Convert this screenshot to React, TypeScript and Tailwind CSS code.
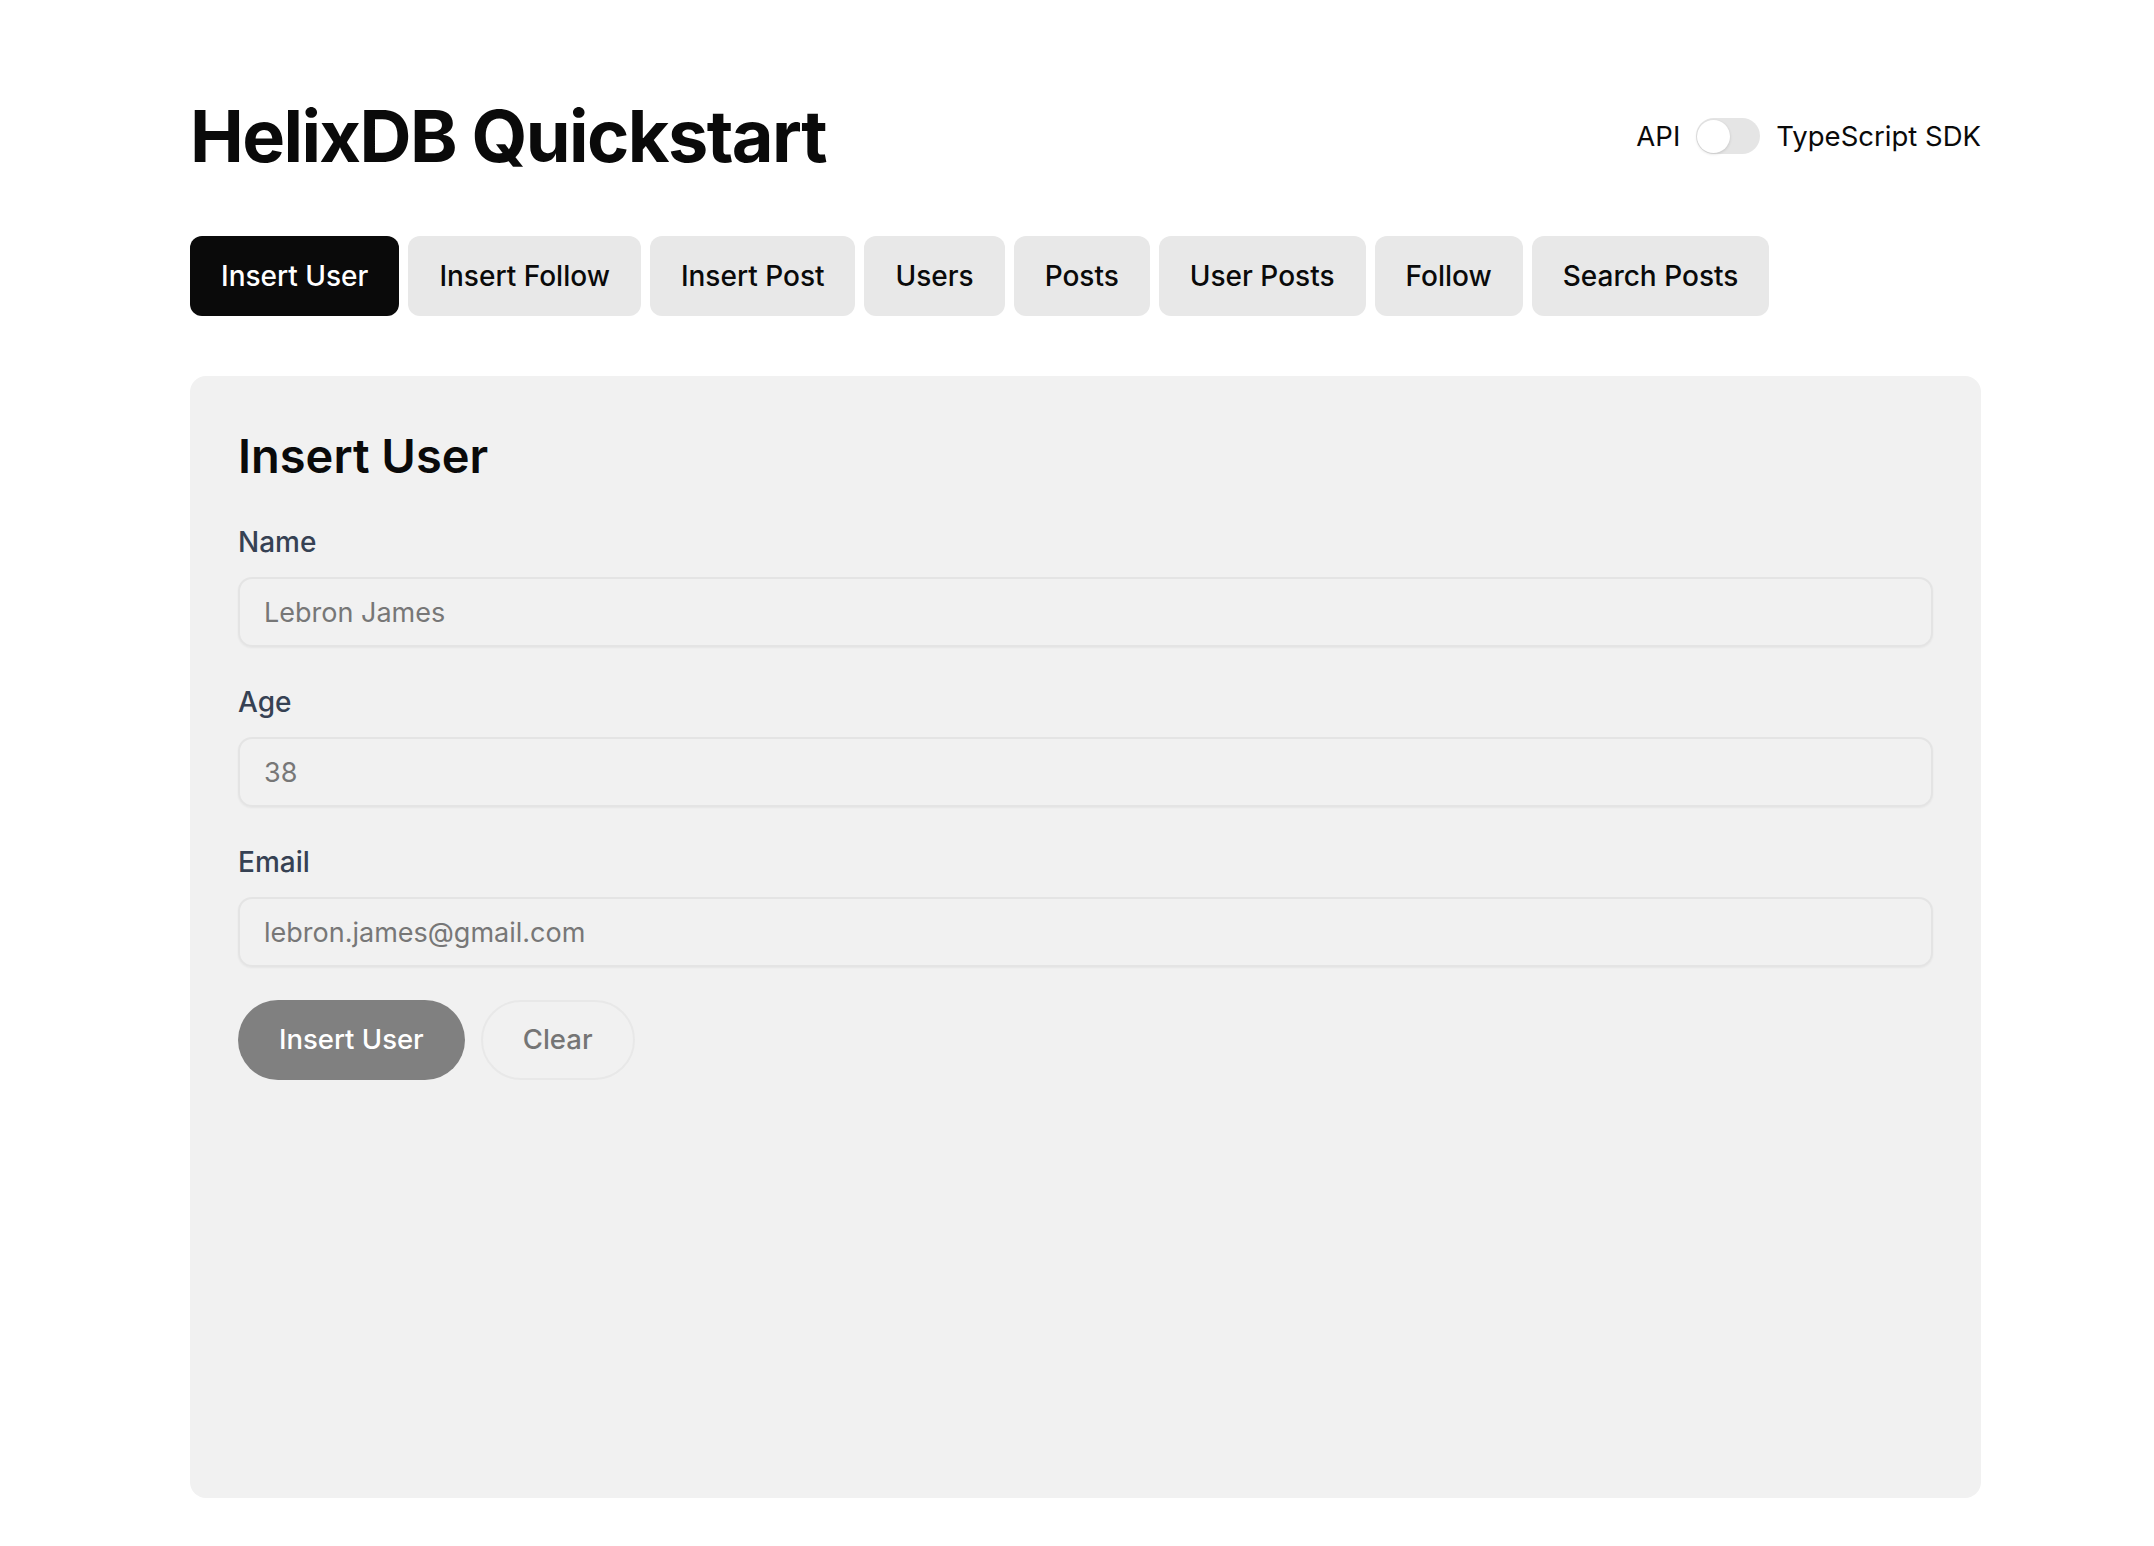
const tabs = [
  "Insert User",
  "Insert Follow",
  "Insert Post",
  "Users",
  "Posts",
  "User Posts",
  "Follow",
  "Search Posts",
];

const fields = [
  { label: "Name", placeholder: "Lebron James", type: "text" },
  { label: "Age", placeholder: "38", type: "number" },
  { label: "Email", placeholder: "lebron.james@gmail.com", type: "email" },
];

export default function App() {
  const active = "Insert User";

  return (
    <div className="min-h-screen bg-white font-['Inter',sans-serif] text-[#0a0a0a]">
      <div className="ml-[190px] w-[1791px] pt-[96px] pb-[48px]">
        <header className="flex items-center justify-between">
          <h1 className="text-[72px] leading-[80px] font-bold tracking-[-0.022em]">
            HelixDB Quickstart
          </h1>
          <div className="flex items-center gap-4 text-[27.5px] leading-[40px]">
            <span>API</span>
            <button className="relative h-[36px] w-[64px] rounded-full bg-[#e5e5e5]">
              <span className="absolute left-[1px] top-[1.5px] h-[33px] w-[33px] rounded-full bg-white shadow-[0_1px_3px_rgba(0,0,0,0.15)]" />
            </button>
            <span>TypeScript SDK</span>
          </div>
        </header>

        <nav className="mt-[60px] flex gap-[9px]">
          {tabs.map((t) => (
            <button
              key={t}
              className={
                t === active
                  ? "h-[80px] rounded-xl bg-[#0a0a0a] px-[31px] text-[28px] font-medium text-white"
                  : "h-[80px] rounded-xl bg-[#e8e8e8] px-[31px] text-[28px] font-medium text-[#0a0a0a]"
              }
            >
              {t}
            </button>
          ))}
        </nav>

        <section className="mt-[60px] h-[1122px] rounded-2xl bg-[#f1f1f1] p-12">
          <h2 className="text-[47px] leading-[64px] font-semibold">Insert User</h2>

          <div className="mt-[34px] flex flex-col gap-[35px]">
            {fields.map((f) => (
              <div key={f.label}>
                <label className="block text-[28px] leading-[40px] font-medium text-gray-700">
                  {f.label}
                </label>
                <input
                  type={f.type}
                  placeholder={f.placeholder}
                  className="mt-[15px] h-[70px] w-full rounded-[14px] border-2 border-[#e4e4e4] bg-transparent px-[24px] text-[27px] shadow-[0_1px_2px_rgba(0,0,0,0.05)] outline-none placeholder:text-[#777777]"
                />
              </div>
            ))}
          </div>

          <div className="mt-[33px] flex gap-4">
            <button className="h-[80px] rounded-full bg-[#808080] px-[41px] text-[27.5px] font-medium text-white">
              Insert User
            </button>
            <button className="h-[80px] rounded-full border-2 border-[#e8e8e8] px-[40px] text-[27.5px] font-medium text-[#757575]">
              Clear
            </button>
          </div>
        </section>
      </div>
    </div>
  );
}
